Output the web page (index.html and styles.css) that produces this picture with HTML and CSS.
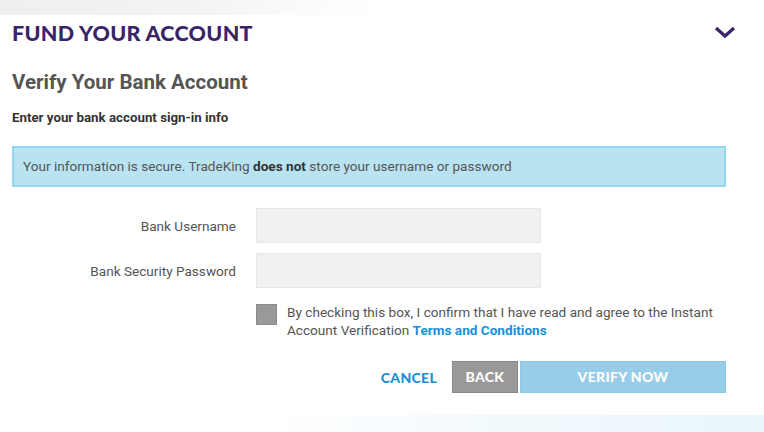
FILE: index.html
```html
<!DOCTYPE html>
<html>
<head>
<meta charset="utf-8">
<link rel="stylesheet" href="styles.css">
</head>
<body>
<div class="topbar"></div>
<div class="page">
  <div class="header">
    <h1 class="title">FUND YOUR ACCOUNT</h1>
    <svg class="chevron" width="22" height="13" viewBox="0 0 22 13"><path d="M2 2 L11 10 L20 2" fill="none" stroke="#3a2468" stroke-width="3.2"/></svg>
  </div>
  <h2 class="subtitle">Verify Your Bank Account</h2>
  <p class="lead">Enter your bank account sign-in info</p>
  <div class="notice">Your information is secure. TradeKing <b>does not</b> store your username or password</div>
  <div class="form">
    <div class="row">
      <span class="label">Bank Username</span>
      <div class="input"></div>
    </div>
    <div class="row">
      <span class="label">Bank Security Password</span>
      <div class="input"></div>
    </div>
    <div class="agree">
      <div class="check"></div>
      <p class="agree-text">By checking this box, I confirm that I have read and agree to the Instant Account Verification <span class="link">Terms and Conditions</span></p>
    </div>
    <div class="actions">
      <span class="cancel">CANCEL</span>
      <span class="btn back">BACK</span>
      <span class="btn verify">VERIFY NOW</span>
    </div>
  </div>
</div>
<div class="bottombar"></div>
</body>
</html>
```

FILE: styles.css
```css
html, body { margin: 0; padding: 0; }
body {
  width: 764px;
  height: 432px;
  overflow: hidden;
  background: #fff;
  font-family: Roboto, "Liberation Sans", sans-serif;
  color: #555;
  display: flex;
  flex-direction: column;
}
.topbar {
  height: 15px;
  background: linear-gradient(to right, #efefef 0%, #f3f3f3 25%, #fbfbfb 40%, #ffffff 50%);
}
.page {
  flex: 1;
  padding: 0 12px;
}
.header {
  display: flex;
  justify-content: space-between;
  align-items: center;
  height: 36px;
}
.title {
  margin: 0;
  font-family: Lato, "Liberation Sans", sans-serif;
  font-weight: 900;
  font-size: 21.5px;
  letter-spacing: 0.3px;
  color: #3a2468;
}
.chevron { margin-right: 16px; margin-top: -2px; }
.subtitle {
  margin: 18px 0 0;
  font-size: 20.5px;
  font-weight: 700;
  color: #555;
  line-height: 26px;
}
.lead {
  margin: 15px 0 0;
  font-size: 13.3px;
  font-weight: 700;
  color: #333;
  line-height: 16px;
}
.notice {
  margin-top: 20px;
  border: 2px solid #92d6ee;
  background: #b9e3f1;
  font-size: 13.6px;
  line-height: 37px;
  padding-left: 9px;
  box-sizing: border-box;
  height: 41px;
  width: 714px;
  color: #555;
}
.notice b { color: #333; font-weight: 700; }
.form { margin-top: 21px; }
.row {
  display: flex;
  align-items: center;
  gap: 20px;
  margin-bottom: 10px;
}
.label {
  width: 224px;
  text-align: right;
  font-size: 13.6px;
  color: #555;
}
.input {
  width: 285px;
  height: 35px;
  box-sizing: border-box;
  background: #f1f1f1;
  border: 1px solid #e6e6e6;
}
.agree {
  display: flex;
  gap: 10px;
  margin-left: 244px;
  margin-top: 15px;
}
.check {
  width: 21px;
  height: 21px;
  flex: none;
  background: #999;
  box-sizing: border-box;
  border: 1px solid #8c8c8c;
  margin-top: 1px;
}
.agree-text {
  margin: 0;
  width: 450px;
  font-size: 13.6px;
  line-height: 18px;
  color: #555;
}
.link { color: #1a8fd6; font-weight: 700; }
.actions {
  display: flex;
  justify-content: flex-end;
  align-items: center;
  width: 714px;
  margin-top: 22px;
}
.cancel {
  font-family: Lato, "Liberation Sans", sans-serif;
  font-weight: 900;
  font-size: 14px;
  letter-spacing: 0.3px;
  color: #1a8fd6;
  margin-right: 15px;
}
.btn {
  height: 32px;
  font-family: Lato, "Liberation Sans", sans-serif;
  font-weight: 900;
  font-size: 14px;
  letter-spacing: 0.3px;
  color: #fff;
  text-align: center;
  box-sizing: border-box;
  line-height: 30px;
}
.back {
  width: 66px;
  background: #999;
  border: 1px solid #888;
}
.verify {
  width: 206px;
  margin-left: 2px;
  background: #97cde9;
  border: 1px solid #8fc8e6;
}
.bottombar {
  position: absolute;
  left: 0;
  bottom: 0;
  width: 764px;
  height: 17px;
  background: linear-gradient(to right, #ffffff 35%, #f4fafd 60%, #e9f6fc 100%);
}
```
